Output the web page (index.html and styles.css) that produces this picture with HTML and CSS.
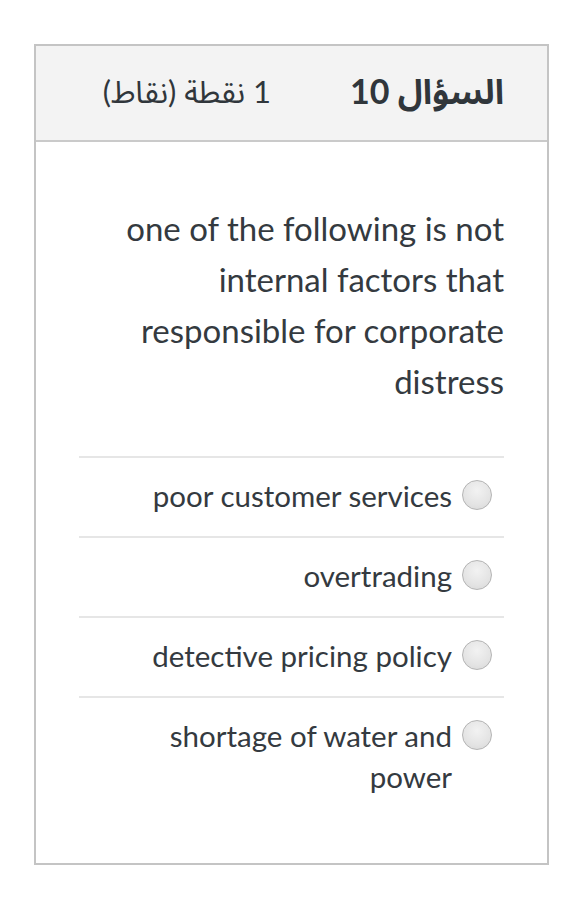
FILE: index.html
```html
<!DOCTYPE html>
<html lang="ar">
<head>
<meta charset="utf-8">
<link rel="stylesheet" href="styles.css">
</head>
<body>
<div class="card" dir="rtl">
  <div class="header">
    <span class="title">السؤال 10</span>
    <span class="points">1 نقطة (نقاط)</span>
  </div>
  <div class="content">
    <p class="question">one of the following is not internal factors that responsible for corporate distress</p>
    <ul class="options">
      <li class="option"><span class="radio"></span><span class="label">poor customer services</span></li>
      <li class="option"><span class="radio"></span><span class="label">overtrading</span></li>
      <li class="option"><span class="radio"></span><span class="label">detective pricing policy</span></li>
      <li class="option"><span class="radio"></span><span class="label">shortage of water and power</span></li>
    </ul>
  </div>
</div>
</body>
</html>
```
FILE: styles.css
```css
html, body {
  margin: 0;
  padding: 0;
  background: #ffffff;
}
body {
  font-family: Lato, "Noto Sans Arabic", "DejaVu Sans", sans-serif;
  color: #343a40;
}
.card {
  margin: 44px 0 0 34px;
  width: 515px;
  box-sizing: border-box;
  border: 2px solid #c4c4c4;
  background: #fff;
}
.header {
  display: flex;
  align-items: center;
  gap: 79px;
  height: 94px;
  padding: 0 43px;
  background: #f3f3f3;
  border-bottom: 2px solid #cacaca;
}
.title {
  font-size: 34px;
  font-weight: 700;
  color: #30363b;
}
.points {
  font-size: 31px;
  color: #30363b;
}
.content {
  padding: 61px 43px 46px 43px;
}
.question {
  margin: 0 0 49px 0;
  text-align: right;
  font-size: 33px;
  line-height: 51px;
  unicode-bidi: plaintext;
}
.options {
  list-style: none;
  margin: 0;
  padding: 0;
}
.option {
  display: flex;
  align-items: flex-start;
  gap: 10px;
  border-top: 2px solid #e6e6e6;
  padding: 17px 12px 20px 0;
}
.radio {
  flex: none;
  width: 28px;
  height: 28px;
  margin-top: 5px;
  border-radius: 50%;
  border: 1px solid #b4b4b4;
  background: radial-gradient(circle at 50% 35%, #f2f2f2 0%, #e4e4e4 60%, #d6d6d6 100%);
}
.label {
  font-size: 29.5px;
  line-height: 41px;
  text-align: right;
  unicode-bidi: plaintext;
  max-width: 305px;
}
```
